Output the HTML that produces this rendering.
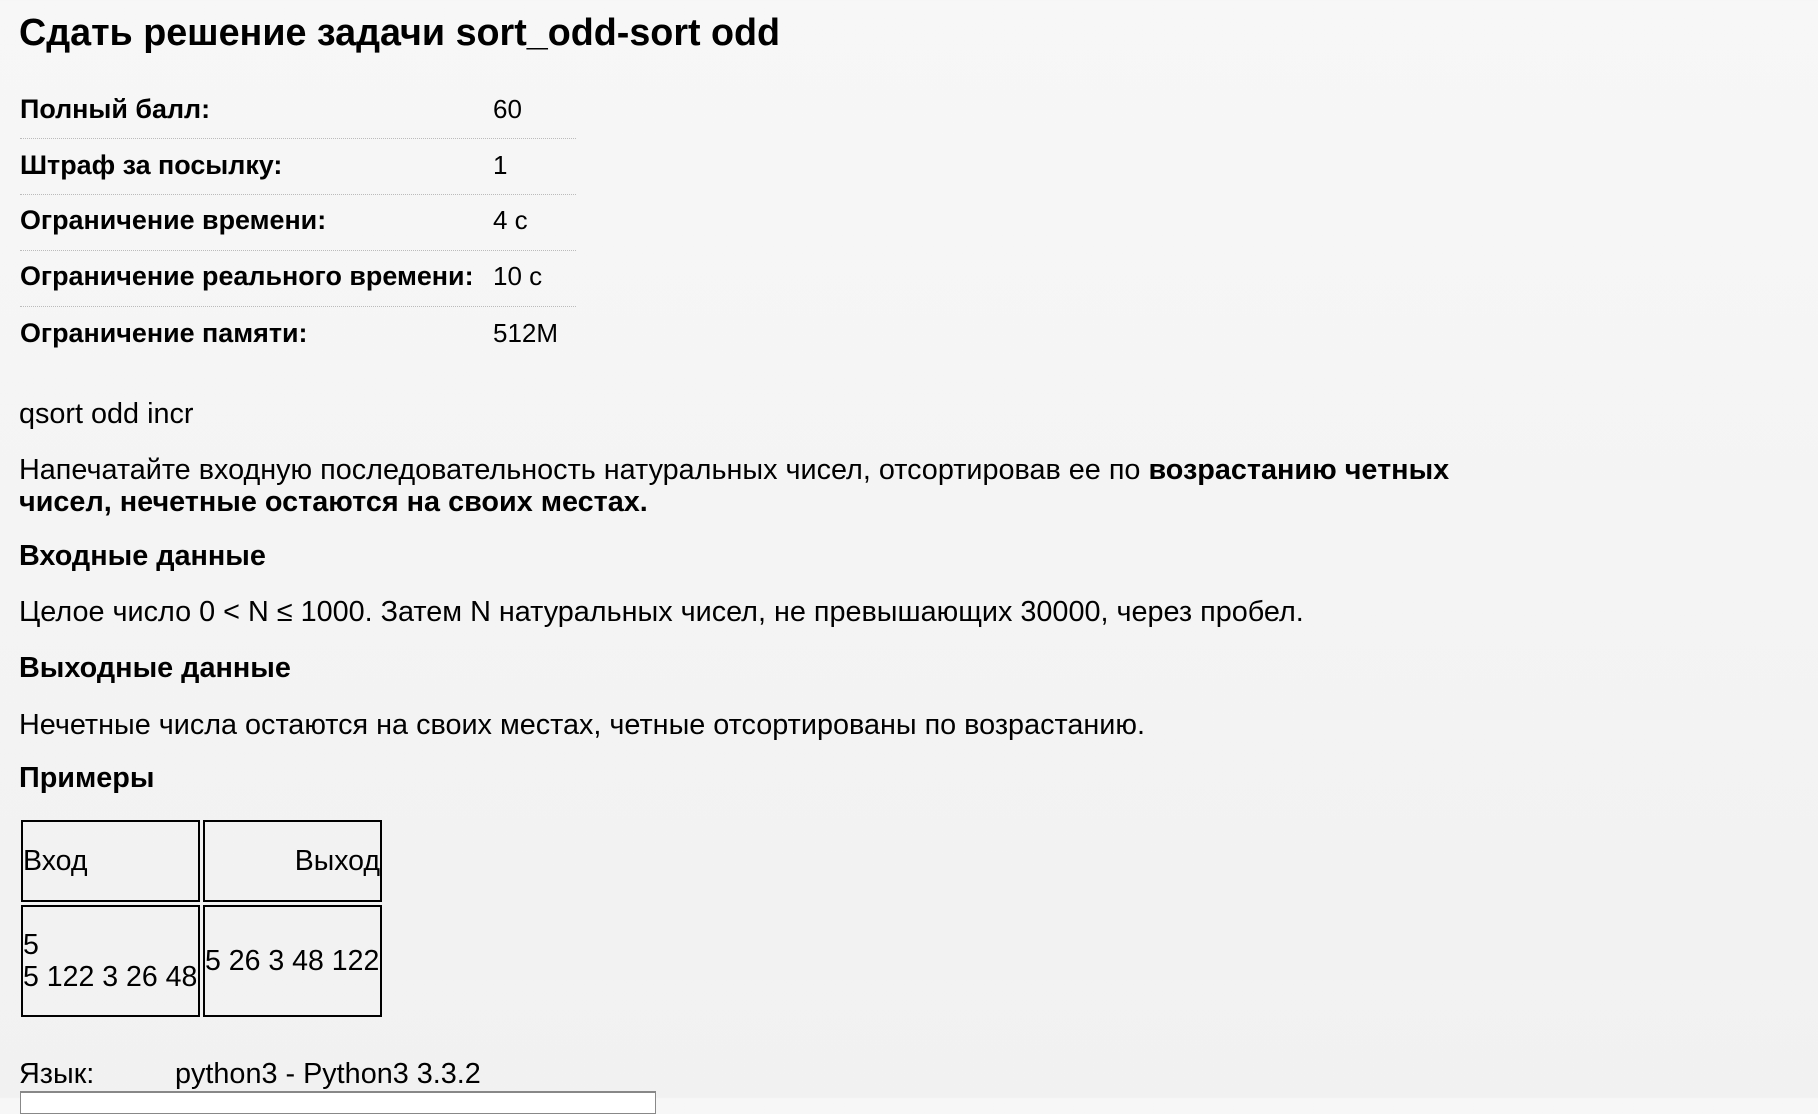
<!DOCTYPE html>
<html><head><meta charset="utf-8"><style>
html,body{margin:0;padding:0}
body{width:1818px;height:1098px;overflow:hidden;position:relative;background:linear-gradient(180deg,#f7f7f7 0%,#f1f1f1 100%);font-family:"Liberation Sans",Arial,sans-serif;color:#000}
.a{position:absolute;white-space:nowrap;line-height:1}
h1{position:absolute;left:19px;top:14px;margin:0;font-size:37.7px;font-weight:bold;line-height:1;white-space:nowrap}
.lbl{font-weight:bold;font-size:26.9px}
.val{font-size:26px}
.dot{position:absolute;left:20px;width:556px;border-top:1px dotted #bbb}
.t{font-size:28.8px}
.b{font-weight:bold}
table{position:absolute;left:18px;top:817px;border-collapse:separate;border-spacing:3px;font-size:28.5px;margin:0}
td{border:2px solid #000;padding:0;line-height:32px}
</style></head><body>
<h1>Сдать решение задачи sort_odd-sort odd</h1>
<div class="a lbl" style="left:20px;top:96px">Полный балл:</div><div class="a val" style="left:493px;top:96px">60</div>
<div class="dot" style="top:138px"></div>
<div class="a lbl" style="left:20px;top:152px">Штраф за посылку:</div><div class="a val" style="left:493px;top:152px">1</div>
<div class="dot" style="top:194px"></div>
<div class="a lbl" style="left:20px;top:207px">Ограничение времени:</div><div class="a val" style="left:493px;top:207px">4 с</div>
<div class="dot" style="top:250px"></div>
<div class="a lbl" style="left:20px;top:263px">Ограничение реального времени:</div><div class="a val" style="left:493px;top:263px">10 с</div>
<div class="dot" style="top:306px"></div>
<div class="a lbl" style="left:20px;top:320px">Ограничение памяти:</div><div class="a val" style="left:493px;top:320px">512M</div>
<div class="a t" style="left:19px;top:400px">qsort odd incr</div>
<div class="a t" style="left:19px;top:456px">Напечатайте входную последовательность натуральных чисел, отсортировав ее по <b>возрастанию четных</b></div>
<div class="a t b" style="left:19px;top:488px">чисел, нечетные остаются на своих местах.</div>
<div class="a t b" style="left:19px;top:542px">Входные данные</div>
<div class="a t" style="left:19px;top:598px">Целое число 0 &lt; N ≤ 1000. Затем N натуральных чисел, не превышающих 30000, через пробел.</div>
<div class="a t b" style="left:19px;top:654px">Выходные данные</div>
<div class="a t" style="left:19px;top:711px">Нечетные числа остаются на своих местах, четные отсортированы по возрастанию.</div>
<div class="a t b" style="left:19px;top:764px">Примеры</div>
<table><tr><td style="width:175px;height:78px">Вход</td><td style="width:175px;text-align:right">Выход</td></tr>
<tr><td style="height:108px">5<br>5 122 3 26 48</td><td>5 26 3 48 122</td></tr></table>
<div class="a t" style="left:19px;top:1060px">Язык:</div>
<div class="a t" style="left:175px;top:1060px">python3 - Python3 3.3.2</div>
<div style="position:absolute;left:20px;top:1091px;width:634px;height:20px;border:1px solid #888;border-top:2px solid #888;background:#fff"></div>
</body></html>
